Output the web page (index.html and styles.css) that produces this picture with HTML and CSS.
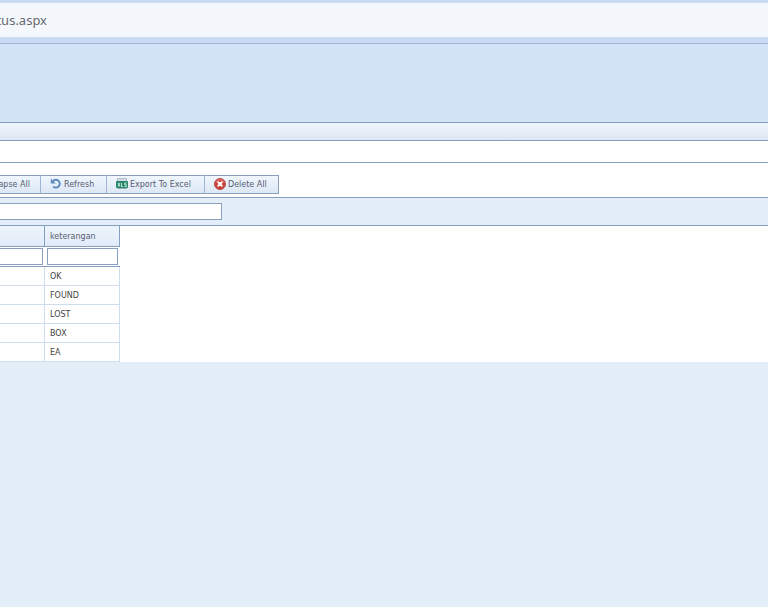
FILE: index.html
```
<!DOCTYPE html>
<html lang="id">
<head>
<meta charset="utf-8">
<title>Status</title>
<link rel="stylesheet" href="styles.css">
</head>
<body>
<header class="address"><span class="url">tus.aspx</span></header>
<div class="banner"></div>
<div class="titlebar"></div>
<div class="strip"></div>
<main class="panel">
  <div class="toolbar">
    <button class="tool tool-first" type="button">apse All</button>
    <button class="tool tool-refresh" type="button">
      <svg class="icon" viewBox="0 0 12 12" aria-hidden="true"><path d="M3 3A3.9 3.9 0 1 1 3.2 8.6" fill="none" stroke="#5b8bbd" stroke-width="2"/><path d="M.8.6v5h5z" fill="#5b8bbd"/></svg>
      Refresh</button>
    <button class="tool tool-export" type="button">
      <svg class="icon" viewBox="0 0 12 12" aria-hidden="true"><path d="M1.5 4V.5h9V4" fill="#d5dbe5" stroke="#b2bdca"/><path d="M1.5 9v1.5h9V9" fill="#fff" stroke="#8fb5ae"/><rect y="3" width="12" height="7" rx="1" fill="#27866c"/><path d="M2 5l2 3.5M4 5L2 8.5M5.5 5v3.5H7M10.5 5H8.7v1.7h1.6v1.8H8.4" fill="none" stroke="#d8eee7" stroke-width=".9"/></svg>
      Export To Excel</button>
    <button class="tool tool-delete" type="button">
      <svg class="icon" viewBox="0 0 12 12" aria-hidden="true"><circle cx="6" cy="6" r="5.5" fill="#cf3d37" stroke="#b5534f"/><path d="M2 4.5a4.3 4.3 0 0 1 8 0" fill="none" stroke="#e5827c"/><path d="M4.2 4.2l3.6 3.6M7.8 4.2L4.2 7.8" stroke="#fff" stroke-width="2" stroke-linecap="round"/></svg>
      Delete All</button>
  </div>
  <div class="search"><input class="search-box" type="text" aria-label="Search"></div>
  <div class="grid-area">
    <table class="grid">
      <thead>
        <tr class="head"><th class="col-first"></th><th class="col-note">keterangan</th></tr>
        <tr class="filter">
          <td><input class="filter-box filter-first" type="text" aria-label="Filter"></td>
          <td><input class="filter-box" type="text" aria-label="Filter keterangan"></td>
        </tr>
      </thead>
      <tbody>
        <tr><td></td><td>OK</td></tr>
        <tr><td></td><td>FOUND</td></tr>
        <tr><td></td><td>LOST</td></tr>
        <tr><td></td><td>BOX</td></tr>
        <tr><td></td><td>EA</td></tr>
      </tbody>
    </table>
  </div>
</main>
</body>
</html>
```
FILE: styles.css
```
* { box-sizing: border-box; }

body {
  margin: 0;
  background: #e4eef8;
  color: #444;
  font: 8px/12px "DejaVu Sans", Verdana, sans-serif;
}

.address {
  display: flex;
  align-items: center;
  height: 43px;
  border-top: 3px solid #cadbf5;
  border-bottom: 6px solid #cadbf5;
  background: #f4f8fd;
}

.url {
  display: flex;
  justify-content: flex-end;
  width: 47px;
  overflow: hidden;
  color: #666a70;
  font: 13px/20px "Noto Sans", "Open Sans", sans-serif;
}

.banner {
  height: 80px;
  border-top: 1px solid #9eb3d2;
  border-bottom: 1px solid #859fc2;
  background: #d3e4f6;
}

.titlebar {
  height: 18px;
  border-bottom: 1px solid #859fc2;
  background: linear-gradient(#eff5fd, #dce7f3);
}

.strip {
  height: 22px;
  border-bottom: 1px solid #859fc2;
  background: #fff;
}

.panel { background: #fff; }

.toolbar {
  display: flex;
  padding: 12px 0 3px;
}

.tool {
  display: flex;
  align-items: center;
  gap: 2px;
  height: 19px;
  margin: 0;
  padding: 0 0 0 9px;
  border: solid #8ba0bf;
  border-width: 1px 1px 1px 0;
  border-right-color: #a0b5d5;
  background: linear-gradient(#f0f6fd, #dce7f4);
  color: #566072;
  font: inherit;
  white-space: nowrap;
}

.tool-first {
  justify-content: flex-end;
  width: 41px;
  padding: 0 10px 0 0;
}

.tool-refresh { width: 66px; }
.tool-export { width: 98px; }
.tool-delete {
  width: 74px;
  border-right-color: #8ba0bf;
}

.icon {
  flex: none;
  width: 12px;
  height: 12px;
  margin-bottom: 1px;
}

.search {
  height: 29px;
  padding-top: 5px;
  border: solid #859fc2;
  border-width: 1px 0;
  background: #e4eef8;
}

.search-box {
  display: block;
  width: 222px;
  height: 17px;
  border: 1px solid #8ba0bf;
  border-left: 0;
  background: #fff;
  font: inherit;
}

.grid {
  width: 120px;
  border-collapse: separate;
  border-spacing: 0;
  table-layout: fixed;
}

.grid th,
.grid td {
  height: 19px;
  padding: 2px 0 0 5px;
  border: solid #cfdcec;
  border-width: 0 1px 1px 0;
  text-align: left;
  font-weight: normal;
}

.grid .head th {
  height: 21px;
  border-color: #859fc2;
  background: linear-gradient(#edf4fc, #e1ebf8);
  color: #566072;
}

.col-first { width: 45px; }

.grid .filter td {
  height: 20px;
  padding: 0 1px 0 2px;
  border-color: #859fc2;
  border-right: 0;
}

.grid .filter td:first-child { padding: 0 2px 0 0; }

.filter-box {
  display: block;
  width: 71px;
  height: 17px;
  border: 1px solid #8ba0bf;
  background: #fff;
  font: inherit;
}

.filter-first {
  width: 43px;
  border-left: 0;
}
```
